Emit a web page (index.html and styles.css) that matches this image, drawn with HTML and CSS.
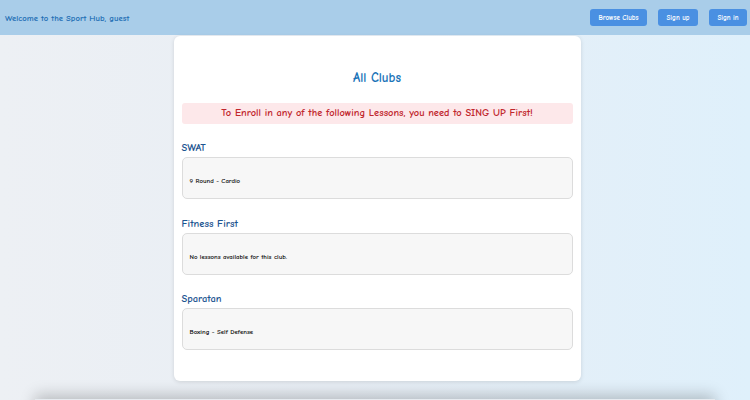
FILE: index.html
```html
<!DOCTYPE html>
<html lang="en">
<head>
<meta charset="utf-8">
<title>Sport Hub - All Clubs</title>
<link rel="stylesheet" href="styles.css">
</head>
<body>
<header class="topbar">
  <span class="welcome">Welcome to the Sport Hub, guest</span>
  <nav class="nav">
    <a class="btn" href="#">Browse Clubs</a>
    <a class="btn" href="#">Sign up</a>
    <a class="btn" href="#">Sign in</a>
  </nav>
</header>
<div class="page">
  <main class="card">
    <h1 class="title">All Clubs</h1>
    <div class="alert">To Enroll in any of the following Lessons, you need to SING UP First!</div>
    <section class="club">
      <h2 class="club-name">SWAT</h2>
      <div class="lessons"><p>9 Round - Cardio</p></div>
    </section>
    <section class="club">
      <h2 class="club-name">Fitness First</h2>
      <div class="lessons"><p>No lessons available for this club.</p></div>
    </section>
    <section class="club">
      <h2 class="club-name">Sparatan</h2>
      <div class="lessons"><p>Boxing - Self Defense</p></div>
    </section>
  </main>
</div>
<footer class="footer"></footer>
</body>
</html>
```
FILE: styles.css
```css
* { box-sizing: border-box; }
html, body { margin: 0; padding: 0; }
body {
  font-family: "Comic Sans MS", "Comic Neue", "Noto Sans", sans-serif;
  background: linear-gradient(90deg, #edf0f4 0%, #e8eef5 45%, #dff0fb 100%);
  min-height: 400px;
  overflow: hidden;
}
.topbar {
  height: 35px;
  background: #a9cde9;
  display: flex;
  align-items: center;
  justify-content: space-between;
  padding: 0 3px 0 5px;
}
.welcome {
  color: #1f6fb5;
  font-size: 8.7px;
  font-weight: bold;
}
.nav {
  display: flex;
  gap: 11px;
}
.btn {
  display: inline-flex;
  align-items: center;
  justify-content: center;
  height: 17px;
  padding: 0 8px;
  background: #4a90e2;
  color: #fff;
  font-size: 7px;
  font-weight: bold;
  text-decoration: none;
  border-radius: 3px;
}
.btn:nth-child(1) { width: 57px; }
.btn:nth-child(2) { width: 40px; }
.btn:nth-child(3) { width: 38px; }
.page {
  display: flex;
  justify-content: center;
  padding-left: 4px;
}
.card {
  width: 407px;
  margin-top: 1px;
  background: #fff;
  border-radius: 6px;
  box-shadow: 0 1px 4px rgba(0,0,0,0.12);
  padding: 32px 8px 31px;
}
.title {
  margin: 0 0 15px;
  text-align: center;
  font-size: 13px;
  font-weight: bold;
  color: #1a73b8;
  line-height: 20px;
}
.alert {
  background: #fde8ea;
  color: #c1272d;
  font-size: 10.4px;
  font-weight: bold;
  text-align: center;
  border-radius: 3px;
  height: 21px;
  line-height: 21px;
  margin-bottom: 17px;
}
.club + .club { margin-top: 17.5px; }
.club-name {
  margin: 0 0 2px;
  font-size: 10.5px;
  font-weight: bold;
  color: #1d5591;
  line-height: 14px;
}
.lessons {
  background: #f7f7f7;
  border: 1px solid #dcdcdc;
  border-radius: 5px;
  height: 42px;
  padding: 18px 7px 0;
}
.lessons p {
  margin: 0;
  font-size: 6.8px;
  font-weight: bold;
  line-height: 10px;
  color: #111;
}
.footer {
  width: 680px;
  height: 60px;
  margin: 18px auto 0;
  background: #e6ebf0;
  box-shadow: 0 -4px 14px rgba(0,0,0,0.22);
}
```
